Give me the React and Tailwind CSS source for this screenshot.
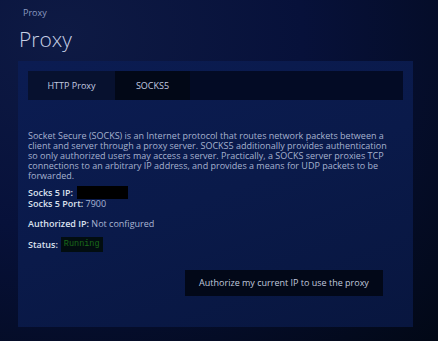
import React from 'react';

const App = () => {
  return (
    <div className="w-[438px] h-[341px] overflow-hidden bg-[radial-gradient(ellipse_at_15%_10%,#0e1a44_0%,#07113a_45%,#020816_100%)] font-['Open_Sans',sans-serif] text-[#a9b5d3] px-[18px] pt-[7px]">
      <div className="text-[9px] text-[#8b9ac0] pl-[5px] leading-[12px]">Proxy</div>
      <h1 className="text-[21px] font-light text-[#c7d0e6] leading-[26px] mt-[7px] pl-[1px]">Proxy</h1>

      <div className="mt-[9px] w-[395px] h-[266px] bg-[linear-gradient(160deg,#0b1c52_0%,#0a1a4a_50%,#08163f_100%)] px-[10px] pt-[10px]">
        <div className="flex h-[29px] bg-[#030b25] text-[9px] text-[#c3cbe0]">
          <button className="w-[87px] bg-[#07112f] flex items-center justify-center">HTTP Proxy</button>
          <button className="w-[75px] bg-[#020817] flex items-center justify-center">SOCKS5</button>
        </div>

        <p className="mt-[31px] text-[9px] leading-[10px] text-[#a6b2cf] pr-[6px]">
          Socket Secure (SOCKS) is an Internet protocol that routes network packets between a client and server through a proxy server. SOCKS5 additionally provides authentication so only authorized users may access a server. Practically, a SOCKS server proxies TCP connections to an arbitrary IP address, and provides a means for UDP packets to be forwarded.
        </p>

        <div className="mt-[5px] text-[9px] leading-[10px]">
          <div className="flex items-center">
            <span className="font-semibold text-[#dbe1ee]">Socks 5 IP:</span>
            <span className="ml-[4px] inline-block w-[51px] h-[13px] bg-black"></span>
          </div>
          <div>
            <span className="font-semibold text-[#dbe1ee]">Socks 5 Port:</span> 7900
          </div>
        </div>

        <div className="mt-[10px] text-[9px] leading-[10px]">
          <span className="font-semibold text-[#dbe1ee]">Authorized IP:</span> Not configured
        </div>

        <div className="mt-[8px] text-[9px] flex items-center">
          <span className="font-semibold text-[#dbe1ee]">Status:</span>
          <span className="ml-[3px] px-[3px] h-[15px] flex items-center bg-[#020d10] text-[#1a6a1a] font-['Liberation_Mono',monospace] text-[8.5px]">Running</span>
        </div>

        <div className="flex justify-end mt-[18px] pr-[20px]">
          <button className="w-[198px] h-[26px] bg-[#020818] text-[9px] text-[#c0c8dd]">
            Authorize my current IP to use the proxy
          </button>
        </div>
      </div>
    </div>
  );
};

export default App;
